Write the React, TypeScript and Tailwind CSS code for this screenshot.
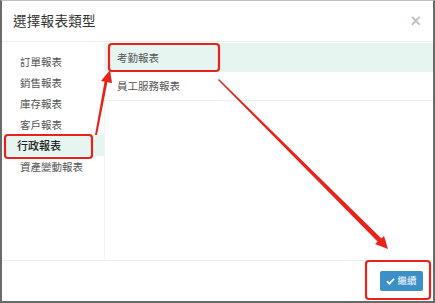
import React from "react";

const leftItems = ["訂單報表", "銷售報表", "庫存報表", "客戶報表", "行政報表", "資產變動報表"];
const rightItems = ["考勤報表", "員工服務報表"];

export default function App() {
  return (
    <div
      className="relative w-[435px] h-[303px] bg-white border-l-2 border-r-2 border-b-2 border-t border-l-[#6a6a6a] border-r-[#6a6a6a] border-b-[#6a6a6a] border-t-[#bdbdbd] overflow-hidden flex flex-col"
      style={{ fontFamily: '"Noto Sans CJK TC", "Noto Sans", sans-serif' }}
    >
      {/* Header */}
      <div className="h-[41px] shrink-0 flex items-center justify-between pl-[11px] pr-[12px] border-b border-[#eeeeee]">
        <span className="text-[13.5px] text-[#333] leading-none tracking-[0.3px]">選擇報表類型</span>
        <span className="text-[18px] text-[#c4c4c4] leading-none font-bold" style={{ fontFamily: '"Liberation Sans", sans-serif' }}>×</span>
      </div>

      {/* Body */}
      <div className="flex flex-1 min-h-0">
        <div className="w-[103px] shrink-0 pl-[3px] pt-[9px] border-r border-[#f4f4f4]">
          {leftItems.map((t) => {
            const active = t === "行政報表";
            return (
              <div
                key={t}
                className={
                  active
                    ? "h-[21px] flex items-center pl-[12px] bg-[#e6f5ef] text-[11px] text-[#222] font-medium"
                    : "h-[21px] flex items-center pl-[15px] text-[10.5px] text-[#555]"
                }
              >
                {t}
              </div>
            );
          })}
        </div>
        <div className="flex-1 pt-[1px]">
          {rightItems.map((t, i) => (
            <div
              key={t}
              className={
                i === 0
                  ? "h-[29px] flex items-center pl-[12px] bg-[#e6f5f0] text-[10.5px] text-[#555]"
                  : "h-[29px] flex items-center pl-[12px] text-[10.5px] text-[#555] border-b border-[#f0f0f0]"
              }
            >
              {t}
            </div>
          ))}
        </div>
      </div>

      {/* Footer */}
      <div className="h-[41px] shrink-0 border-t border-[#efefef] flex items-center justify-end pr-[10px] pb-[1px]">
        <button className="h-[20px] w-[43px] rounded-[2px] bg-[#3d8fc7] text-white text-[9.5px] flex items-center justify-center gap-[2px]">
          <svg width="9" height="8" viewBox="0 0 10 8">
            <path d="M1 4.2 L3.8 7 L9 1.5" stroke="white" strokeWidth="2" fill="none" />
          </svg>
          <span>繼續</span>
        </button>
      </div>

      {/* Annotations */}
      <svg className="absolute left-[-2px] top-[-1px] pointer-events-none" width="435" height="303" viewBox="0 0 435 303">
        <rect x="5" y="135" width="87" height="23" rx="3" fill="none" stroke="#e8231b" strokeWidth="2.2" />
        <rect x="109" y="44" width="110" height="27" rx="3" fill="none" stroke="#e8231b" strokeWidth="2.2" />
        <rect x="366" y="261" width="64" height="38" rx="3" fill="none" stroke="#e8231b" strokeWidth="2.2" />
        {/* arrow 1 */}
        <polygon points="95,135 97,135 108,79 105,79" fill="#e8231b" />
        <polygon points="110,70 101,81 112,83" fill="#e8231b" />
        {/* arrow 2 */}
        <polygon points="218,80 219,79 383,240 379,243" fill="#e8231b" />
        <polygon points="388,249 375,244 384,236" fill="#e8231b" />
      </svg>
    </div>
  );
}
